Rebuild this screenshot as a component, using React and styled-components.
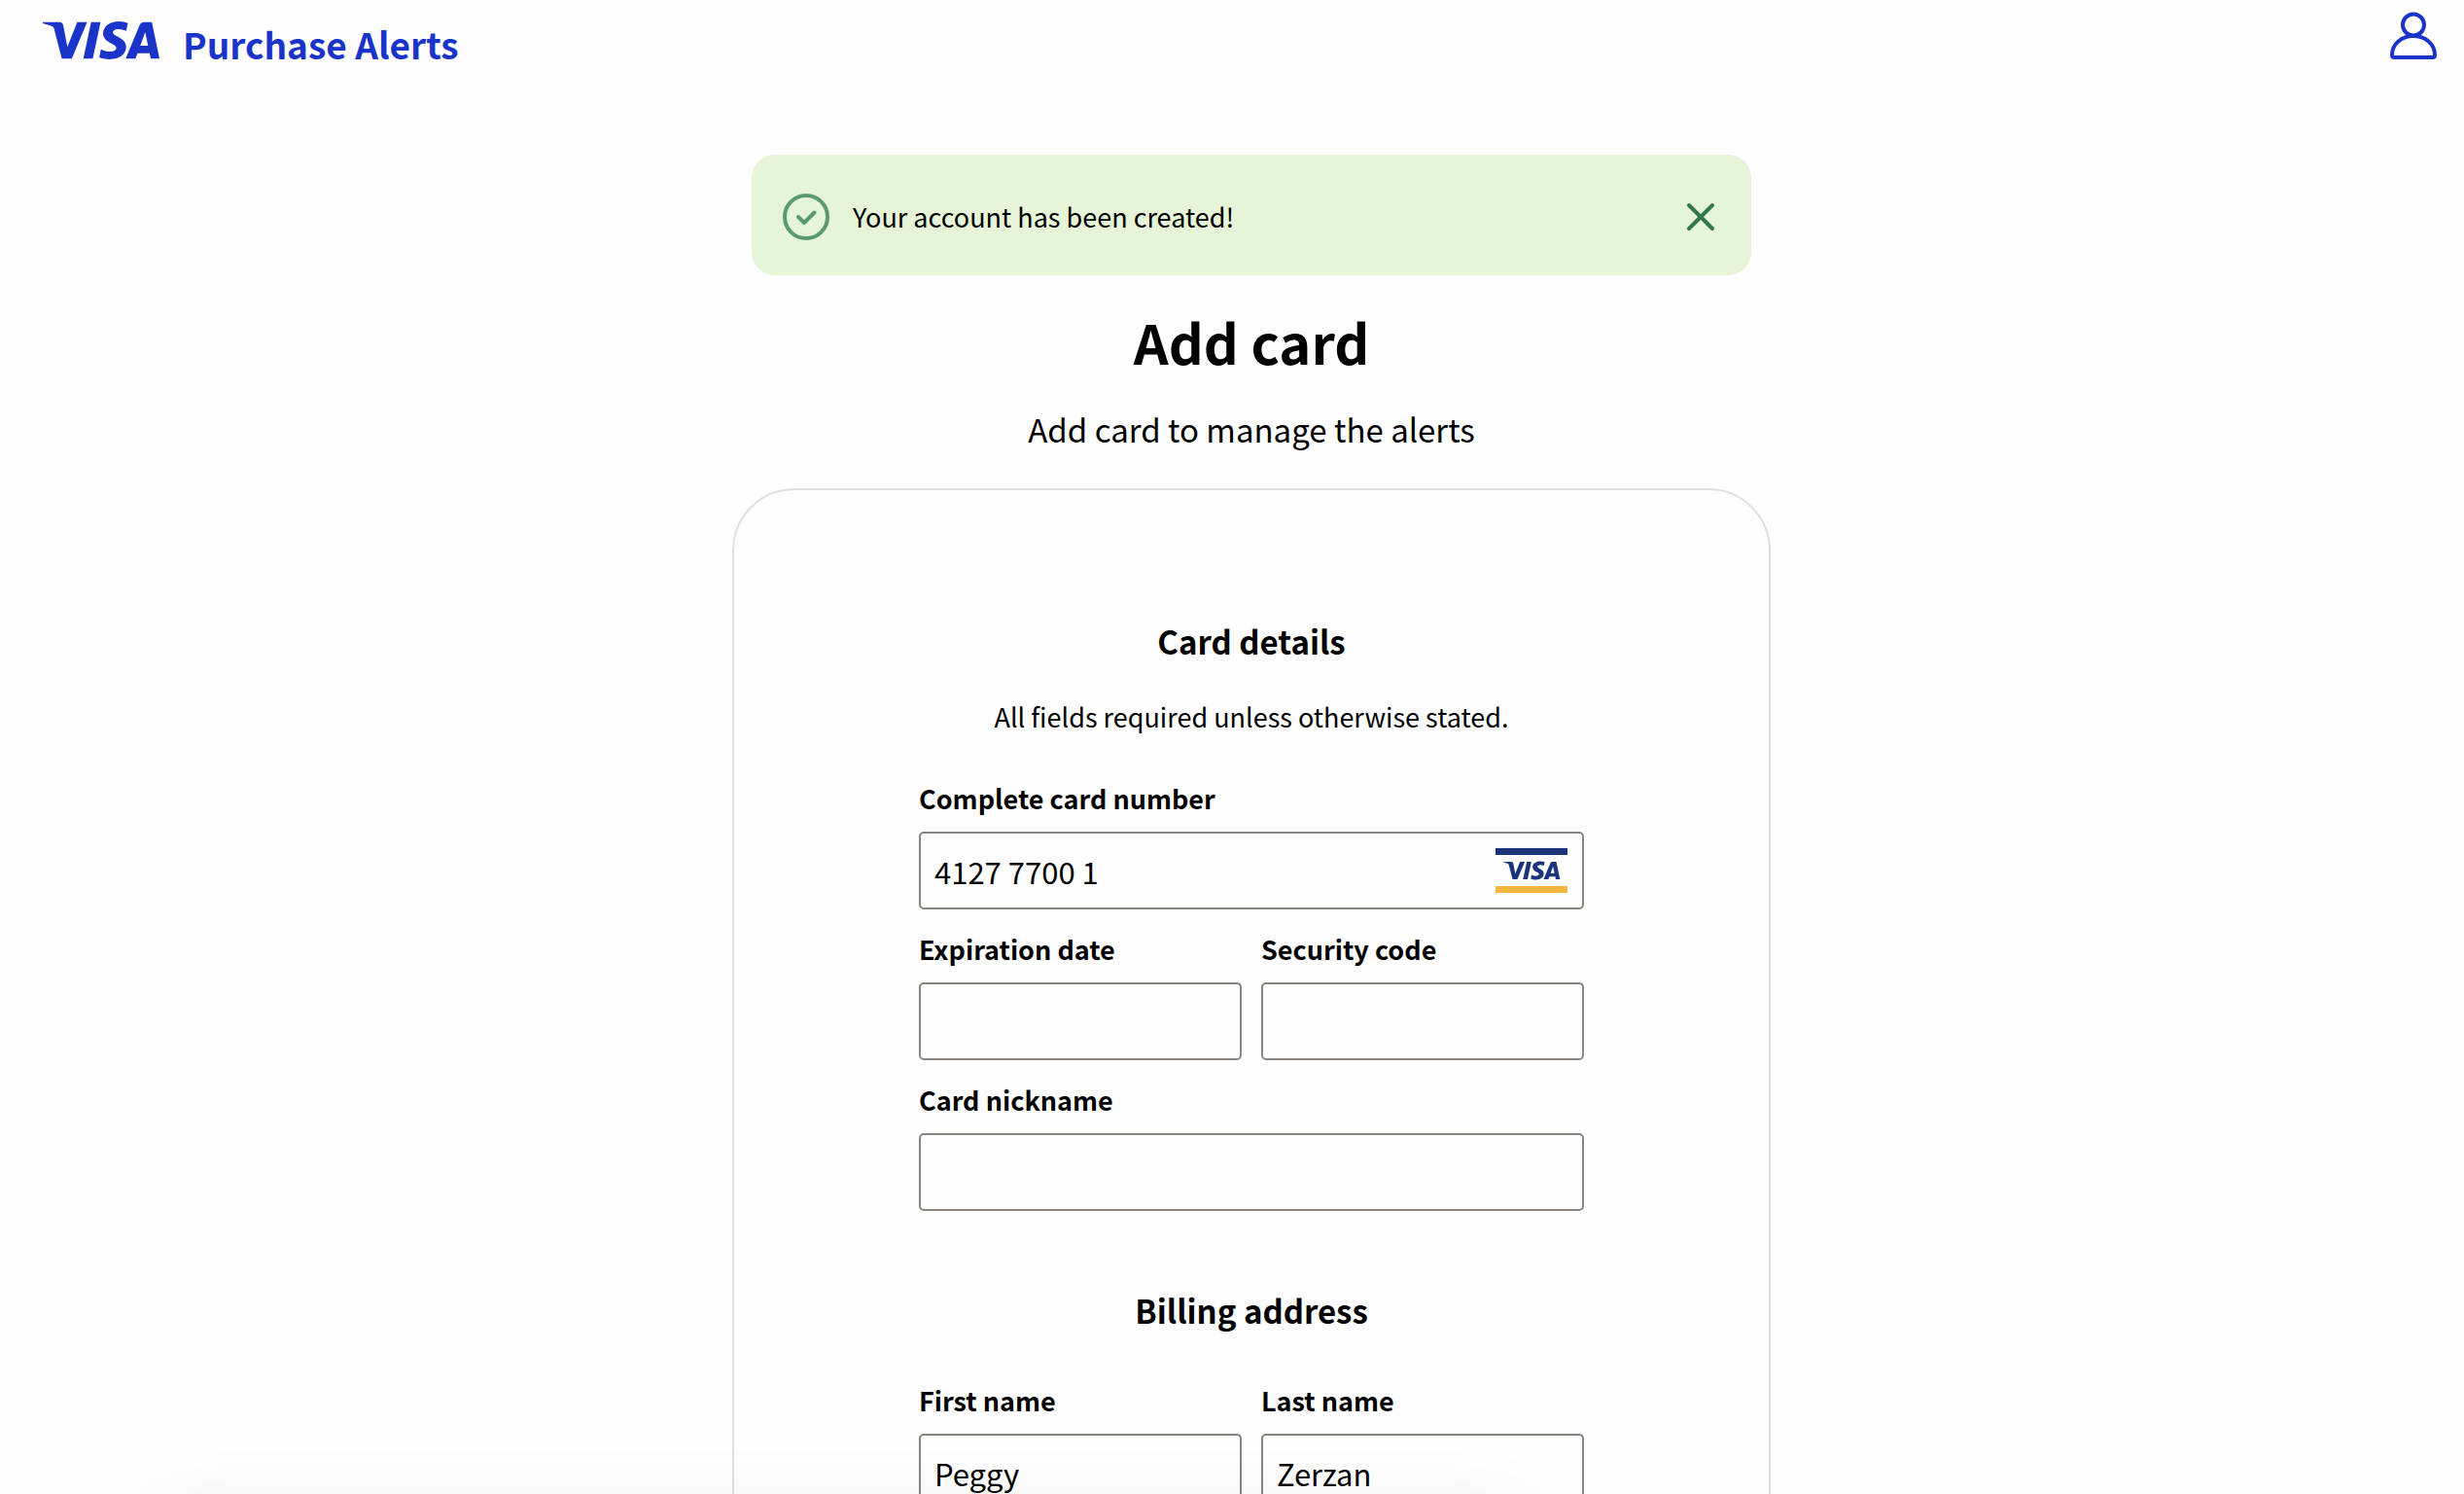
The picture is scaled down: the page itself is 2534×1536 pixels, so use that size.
import React, { useId, useState } from "react";
import styled, { createGlobalStyle } from "styled-components";

const GlobalStyle = createGlobalStyle`
  *, *::before, *::after { box-sizing: border-box; }
  body {
    margin: 0;
    background: #fefefe;
    color: #000;
    font-family: "Noto Sans CJK SC", "Open Sans", sans-serif;
    font-size: 27px;
    line-height: 40px;
  }
`;

const Shell = styled.div`
  position: relative;
  height: 100vh;
  overflow: hidden;
`;

const Scroller = styled.div`
  height: 100%;
  overflow-y: auto;
  scrollbar-width: none;
`;

const Header = styled.header`
  display: flex;
  align-items: flex-start;
  justify-content: space-between;
  padding: 12px 28px 0 44px;
  height: 96px;
  color: #1a33c8;
`;

const Brand = styled.a`
  display: flex;
  align-items: baseline;
  gap: 24px;
  color: inherit;
  text-decoration: none;
`;

const BrandName = styled.span`
  font-size: 37px;
  font-weight: 700;
  line-height: 67px;
`;

const IconButton = styled.button`
  display: flex;
  padding: 0;
  border: 0;
  background: none;
  color: inherit;
  cursor: pointer;
`;

const Main = styled.main`
  display: flex;
  flex-direction: column;
  align-items: center;
  padding: 63px 0 80px 40px;
`;

const Banner = styled.div`
  display: flex;
  align-items: center;
  gap: 24px;
  width: 100%;
  max-width: 1028px;
  min-height: 124px;
  padding: 4px 36px 0 32px;
  border-radius: 24px;
  background: #e6f4d8;
  color: #33784c;
`;

const BannerText = styled.p`
  flex: 1;
  margin: 0;
  color: #000;
`;

const PageTitle = styled.h1`
  margin: 28px 0 0;
  font-size: 56px;
  font-weight: 700;
  line-height: 80px;
`;

const PageSubtitle = styled.p`
  margin: 26px 0 37px;
  font-size: 33px;
  line-height: 48px;
`;

const Card = styled.form`
  display: flex;
  flex-direction: column;
  width: 100%;
  max-width: 1068px;
  padding: 131px 190px;
  border: 2px solid #e0e0e0;
  border-radius: 64px;
`;

const SectionTitle = styled.h2`
  margin: 0;
  font-size: 33px;
  font-weight: 700;
  line-height: 48px;
  text-align: center;
`;

const Hint = styled.p`
  margin: 34px 0 0;
  text-align: center;
`;

const Fields = styled.div`
  display: grid;
  grid-template-columns: repeat(2, minmax(0, 1fr));
  gap: 21px 20px;
  margin: ${(p) => (p.$afterTitle ? "49px" : "44px")} 0 78px;
`;

const FieldBox = styled.div`
  display: flex;
  flex-direction: column;
  gap: 14px;
  grid-column: ${(p) => (p.$wide ? "1 / -1" : "auto")};
`;

const Label = styled.label`
  font-weight: 700;
`;

const InputFrame = styled.div`
  display: flex;
  align-items: center;
  height: 80px;
  padding: 0 15px 0 14px;
  border: 2px solid #8a8581;
  border-radius: 5px;
`;

const Input = styled.input`
  flex: 1;
  min-width: 0;
  height: 100%;
  padding: 0;
  border: 0;
  outline: 0;
  background: none;
  color: #000;
  font-family: inherit;
  font-size: 31px;
`;

const BottomShade = styled.div`
  position: absolute;
  left: 6%;
  right: 38%;
  bottom: -220px;
  height: 200px;
  box-shadow: 0 0 80px rgba(0, 0, 0, 0.08);
  pointer-events: none;
`;

const VISA_PATH =
  "M9.112 8.262L5.97 15.758H3.92L2.374 9.775c-.094-.368-.175-.503-.461-.658C1.447 8.864.677 8.627 0 8.479l.046-.217h3.3a.904.904 0 01.894.764l.817 4.338 2.018-5.102zm8.033 5.049c.008-1.979-2.736-2.088-2.717-2.972.006-.269.262-.555.822-.628a3.66 3.66 0 011.913.336l.34-1.59a5.207 5.207 0 00-1.814-.333c-1.917 0-3.266 1.02-3.278 2.479-.012 1.079.963 1.68 1.698 2.04.756.367 1.01.603 1.006.931-.005.504-.602.725-1.16.734-.975.015-1.54-.263-1.992-.473l-.351 1.642c.453.208 1.289.39 2.156.398 2.037 0 3.37-1.006 3.377-2.564m5.061 2.447H24l-1.565-7.496h-1.656a.883.883 0 00-.826.55l-2.909 6.946h2.036l.405-1.12h2.488zm-2.163-2.656l1.02-2.815.588 2.815zm-8.16-4.84l-1.603 7.496H8.34l1.605-7.496z";

const VisaLogo = () => (
  <svg width="120" height="39" viewBox="0 8.1 24 7.8" role="img" aria-label="Visa">
    <path d={VISA_PATH} fill="currentColor" />
  </svg>
);

const VisaCardMark = () => (
  <svg width="74" height="46" viewBox="0 0 74 46" role="img" aria-label="Visa card">
    <rect width="74" height="7" fill="#1a357c" />
    <rect y="39" width="74" height="7" fill="#f4b541" />
    <g transform="translate(8 -6.2) scale(2.43)">
      <path d={VISA_PATH} fill="#1a357c" />
    </g>
  </svg>
);

const UserIcon = () => (
  <svg width="48" height="50" viewBox="0 0 48 50" fill="none" stroke="currentColor" strokeWidth="4">
    <circle cx="24" cy="13.5" r="11" />
    <path d="M2 44.5C2 33 12 25 24 25s22 8 22 19.500c0 1.500-.8 2.500-2.200 2.500H4.200C2.800 47 2 46 2 44.500z" />
  </svg>
);

const CheckCircleIcon = () => (
  <svg width="48" height="48" viewBox="0 0 48 48" fill="none" stroke="#599a71" strokeWidth="4" strokeLinecap="round" strokeLinejoin="round">
    <circle cx="24" cy="24" r="22" />
    <path d="M16 24l6 6 10.500-10.500" />
  </svg>
);

const CloseIcon = () => (
  <svg width="32" height="32" viewBox="0 0 32 32" fill="none" stroke="currentColor" strokeWidth="4" strokeLinecap="round">
    <path d="M4 4l24 24M28 4L4 28" />
  </svg>
);

function Field({ label, value = "", wide, children }) {
  const id = useId();
  const [text, setText] = useState(value);
  return (
    <FieldBox $wide={wide}>
      <Label htmlFor={id}>{label}</Label>
      <InputFrame>
        <Input id={id} value={text} onChange={(e) => setText(e.target.value)} />
        {children}
      </InputFrame>
    </FieldBox>
  );
}

export default function App() {
  const [bannerOpen, setBannerOpen] = useState(true);
  return (
    <Shell>
      <GlobalStyle />
      <Scroller>
        <Header>
          <Brand href="#">
            <VisaLogo />
            <BrandName>Purchase Alerts</BrandName>
          </Brand>
          <IconButton type="button" aria-label="Account">
            <UserIcon />
          </IconButton>
        </Header>
        <Main>
          {bannerOpen && (
            <Banner role="status">
              <CheckCircleIcon />
              <BannerText>Your account has been created!</BannerText>
              <IconButton type="button" aria-label="Close" onClick={() => setBannerOpen(false)}>
                <CloseIcon />
              </IconButton>
            </Banner>
          )}
          <PageTitle>Add card</PageTitle>
          <PageSubtitle>Add card to manage the alerts</PageSubtitle>
          <Card>
            <SectionTitle>Card details</SectionTitle>
            <Hint>All fields required unless otherwise stated.</Hint>
            <Fields>
              <Field label="Complete card number" value="4127 7700 1" wide>
                <VisaCardMark />
              </Field>
              <Field label="Expiration date" />
              <Field label="Security code" />
              <Field label="Card nickname" wide />
            </Fields>
            <SectionTitle>Billing address</SectionTitle>
            <Fields $afterTitle>
              <Field label="First name" value="Peggy" />
              <Field label="Last name" value="Zerzan" />
            </Fields>
          </Card>
        </Main>
      </Scroller>
      <BottomShade />
    </Shell>
  );
}
